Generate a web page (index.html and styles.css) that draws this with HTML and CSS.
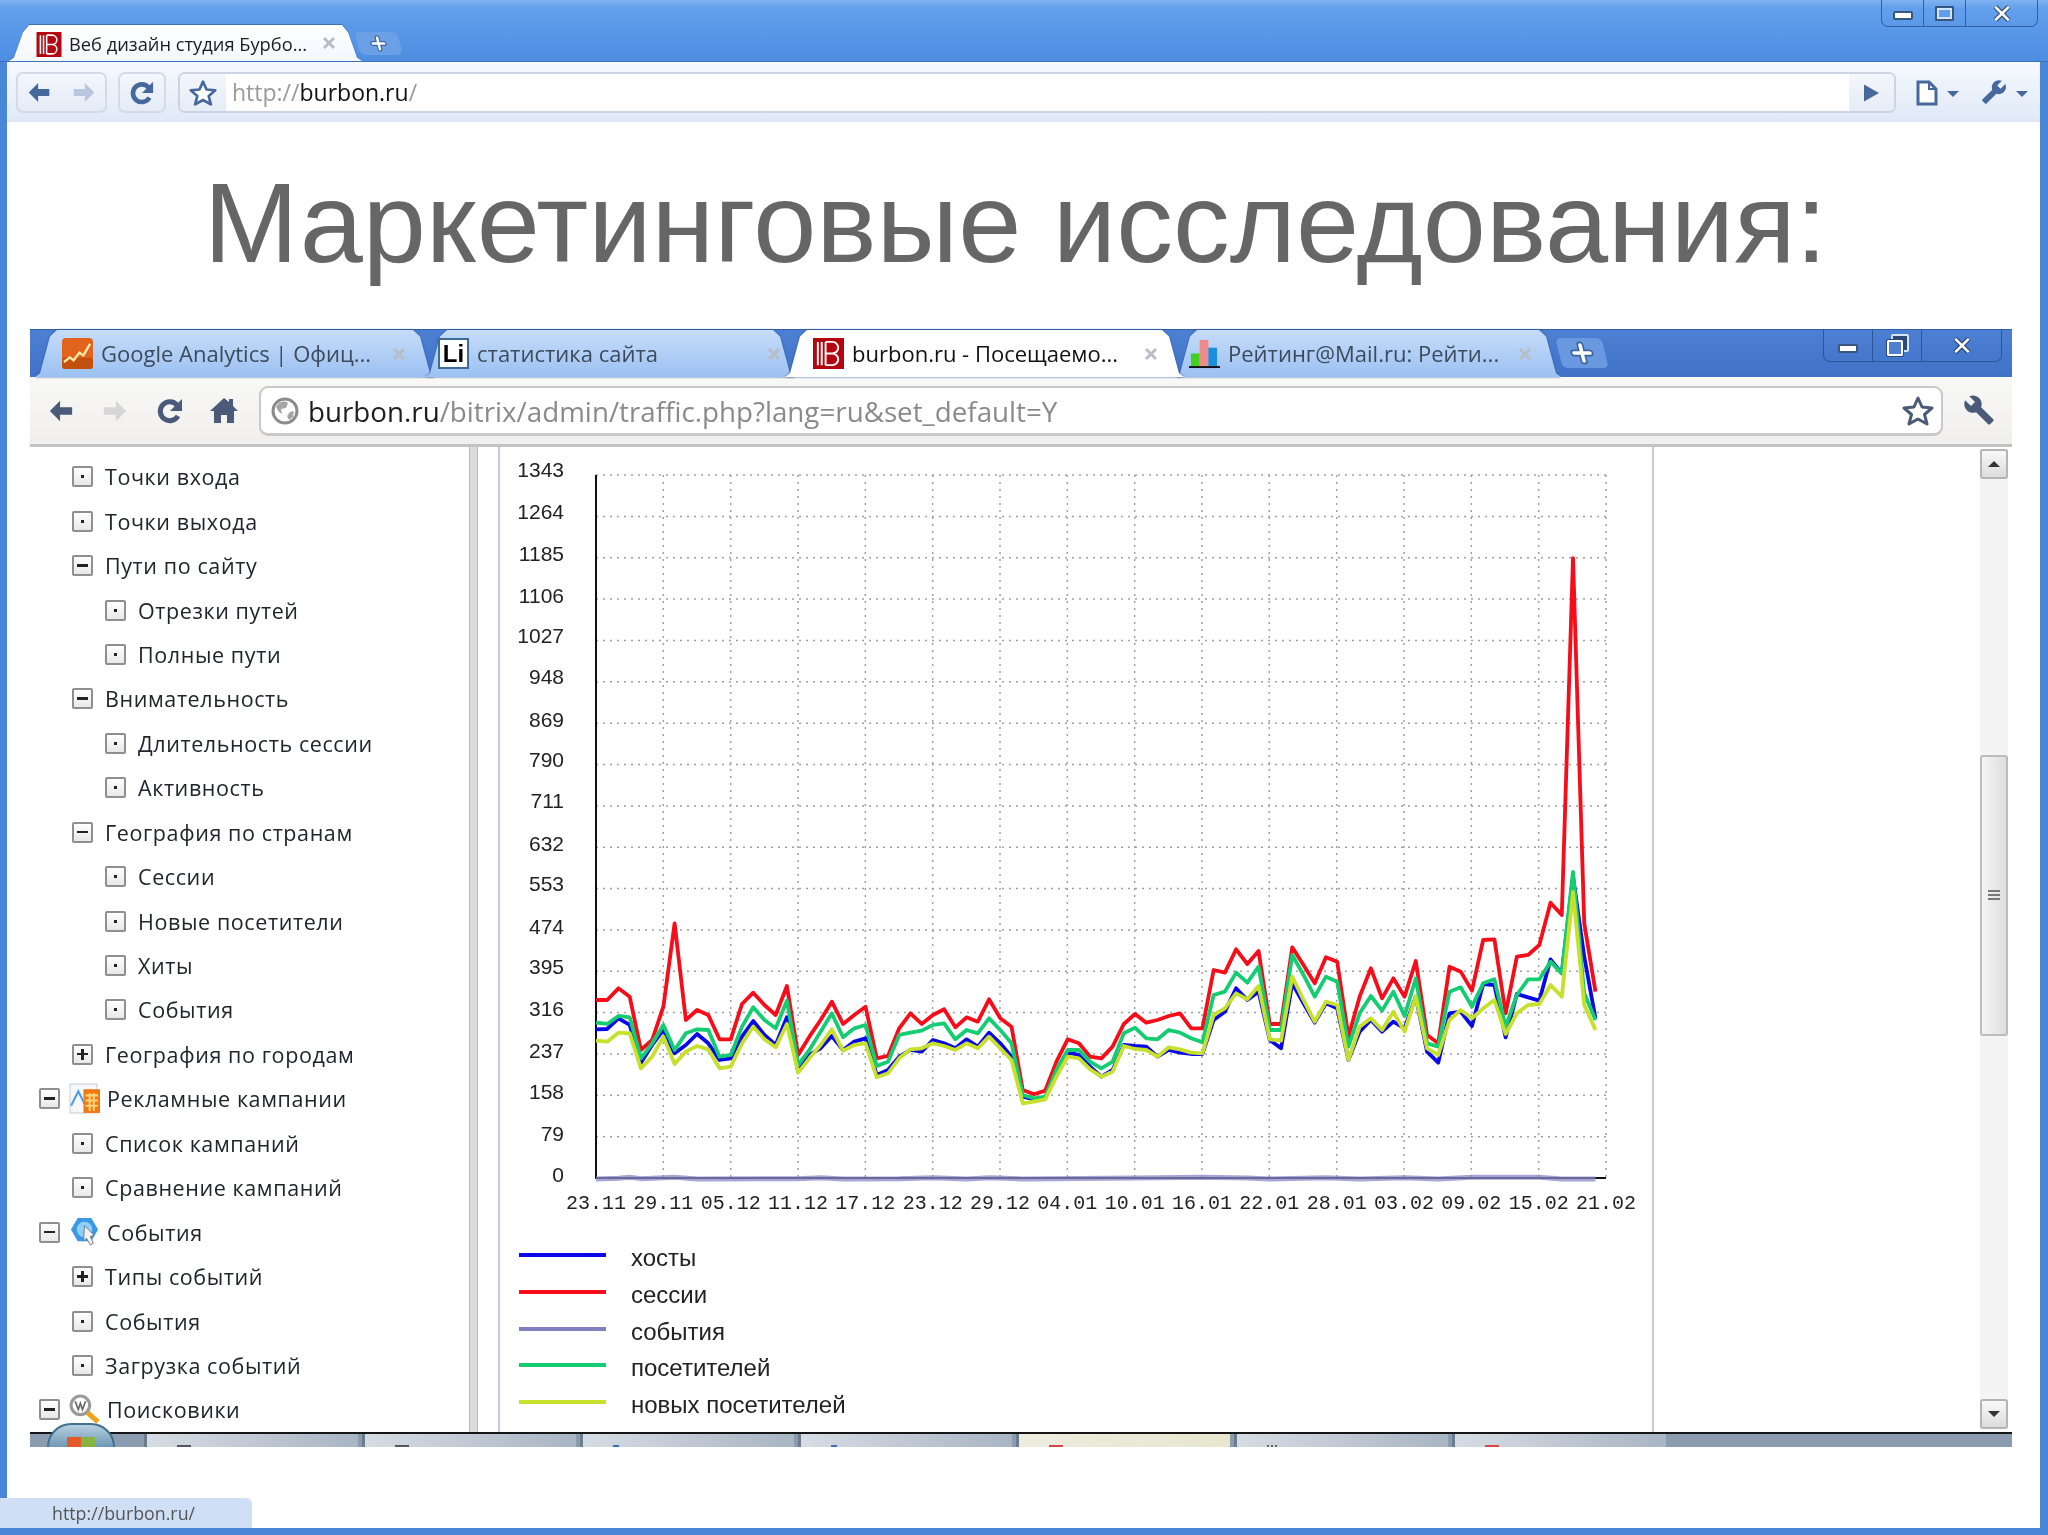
FILE: index.html
```html
<!DOCTYPE html>
<html lang="ru">
<head>
    <meta charset="utf-8">
    <title>Маркетинговые исследования</title>
    <link rel="stylesheet" href="styles.css">
</head>
<body>
    <svg class="defs" width="0" height="0">
        <symbol id="fav-b" viewBox="0 0 32 32">
            <rect width="32" height="32" fill="#b4060e"/>
            <path d="M5 4v24M9 4v24M13 4h7a6 6 0 0 1 0 12h-7M20 16a6 6 0 0 1 0 12h-7M13 4v24" fill="none" stroke="#fff" stroke-width="2"/>
        </symbol>
        <symbol id="fav-ga" viewBox="0 0 32 32">
            <rect width="32" height="32" rx="4" fill="#e2641c"/>
            <rect y="20" width="32" height="12" rx="3" fill="#c4500f"/>
            <path d="M2 25l6-5 4 3 6-8 4 3 7-12" fill="none" stroke="#ffe9a8" stroke-width="2.4"/>
        </symbol>
        <symbol id="fav-rating" viewBox="0 0 32 32">
            <rect x="2" y="16" width="9" height="13" fill="#3fd21a"/>
            <rect x="11" y="2" width="9" height="27" fill="#f08a8a"/>
            <rect x="20" y="10" width="9" height="19" fill="#1a90dc"/>
            <rect y="29" width="32" height="2" fill="#111"/>
        </symbol>
        <symbol id="ico-back" viewBox="0 0 28 24"><path d="M13 1 2 12l11 11v-7h13V8H13z"/></symbol>
        <symbol id="ico-reload" viewBox="0 0 28 28"><path d="M22 19a9.500 9.500 0 1 1-1-11" fill="none" stroke="currentColor" stroke-width="5"/><path d="M26 2v12H14z"/></symbol>
        <symbol id="ico-star" viewBox="0 0 32 32"><path d="M16 3l4 9 10 1-7.500 6.500L25 29l-9-5-9 5 2.500-9.500L2 13l10-1z" fill="#fff" stroke="currentColor" stroke-width="3" stroke-linejoin="round"/></symbol>
        <symbol id="ico-wrench" viewBox="0 0 24 24"><path d="M22.700 19l-9.100-9.100c.9-2.300.4-5-1.500-6.900-2-2-5-2.400-7.400-1.300L9 6 6 9 1.600 4.700C.4 7.100.9 10.100 2.900 12.100c1.900 1.900 4.600 2.400 6.900 1.500l9.100 9.100c.4.4 1 .4 1.400 0l2.300-2.300c.5-.4.5-1.100.1-1.400z"/></symbol>
        <symbol id="ico-close" viewBox="0 0 14 14"><path d="M2 2l10 10M12 2L2 12" fill="none" stroke="currentColor" stroke-width="3"/></symbol>
        <symbol id="ico-plus" viewBox="0 0 24 24"><path d="M12 4v16M4 12h16" stroke="#3d659f" stroke-width="7" stroke-linecap="round"/><path d="M12 4v16M4 12h16" stroke="#fff" stroke-width="3.600" stroke-linecap="round"/></symbol>
    </svg>

    <div class="window">
        <div class="strip">
            <div class="tab tab-outer">
                <svg class="fav-outer"><use href="#fav-b"/></svg>
                <span class="tab-title">Веб дизайн студия Бурбо...</span>
                <svg class="tab-close"><use href="#ico-close"/></svg>
            </div>
            <svg class="newtab newtab-outer" viewBox="0 0 24 24"><use href="#ico-plus"/></svg>
            <div class="controls controls-outer">
                <div class="ctl"><span class="ctl-min"></span></div>
                <div class="ctl"><span class="ctl-max"></span></div>
                <div class="ctl ctl-wide"><svg class="ctl-x" viewBox="0 0 24 20"><path d="M4 2l16 16M20 2L4 18" stroke="#39567f" stroke-width="6"/><path d="M4 2l16 16M20 2L4 18" stroke="#fff" stroke-width="3"/></svg></div>
            </div>
        </div>

        <div class="toolbar">
            <div class="navgroup">
                <svg class="arrow"><use href="#ico-back"/></svg>
                <svg class="arrow arrow-off flip"><use href="#ico-back"/></svg>
            </div>
            <div class="reload-btn"><svg class="reload"><use href="#ico-reload"/></svg></div>
            <div class="omni">
                <div class="omni-star"><svg class="star"><use href="#ico-star"/></svg></div>
                <div class="omni-url"><span class="url-dim">http://</span>burbon.ru<span class="url-dim">/</span></div>
                <div class="omni-go"><svg class="go" viewBox="0 0 16 18"><path d="M0 0l16 9-16 9z"/></svg></div>
            </div>
            <svg class="page-ico" viewBox="0 0 22 26"><path d="M2 2h11l7 7v15H2z" fill="#fff" stroke="currentColor" stroke-width="3"/><path d="M13 2v7h7" fill="none" stroke="currentColor" stroke-width="2"/></svg>
            <span class="caret"></span>
            <svg class="wrench-outer"><use href="#ico-wrench"/></svg>
            <span class="caret"></span>
        </div>

        <div class="page">
            <h1 class="headline">Маркетинговые исследования:</h1>

            <div class="shot">
                <div class="shot-tabs">
                    <div class="itab itab-ga">
                        <svg class="ifav"><use href="#fav-ga"/></svg>
                        <span class="itab-title">Google Analytics | Офиц...</span>
                        <svg class="tab-close"><use href="#ico-close"/></svg>
                    </div>
                    <div class="itab itab-li">
                        <span class="fav-li">Li</span>
                        <span class="itab-title">статистика сайта</span>
                        <svg class="tab-close"><use href="#ico-close"/></svg>
                    </div>
                    <div class="itab itab-active">
                        <svg class="ifav"><use href="#fav-b"/></svg>
                        <span class="itab-title">burbon.ru - Посещаемо...</span>
                        <svg class="tab-close"><use href="#ico-close"/></svg>
                    </div>
                    <div class="itab itab-mail">
                        <svg class="ifav"><use href="#fav-rating"/></svg>
                        <span class="itab-title">Рейтинг@Mail.ru: Рейти...</span>
                        <svg class="tab-close"><use href="#ico-close"/></svg>
                    </div>
                    <svg class="newtab newtab-inner" viewBox="0 0 24 24"><use href="#ico-plus"/></svg>
                    <div class="controls controls-inner">
                        <div class="ctl"><span class="ctl-min"></span></div>
                        <div class="ctl"><span class="ctl-restore"></span></div>
                        <div class="ctl ctl-wide"><svg class="ctl-x" viewBox="0 0 24 20"><path d="M4 2l16 16M20 2L4 18" stroke="#2c4a78" stroke-width="6"/><path d="M4 2l16 16M20 2L4 18" stroke="#fff" stroke-width="3"/></svg></div>
                    </div>
                </div>

                <div class="shot-toolbar">
                    <svg class="iarrow"><use href="#ico-back"/></svg>
                    <svg class="iarrow iarrow-off flip"><use href="#ico-back"/></svg>
                    <svg class="ireload"><use href="#ico-reload"/></svg>
                    <svg class="ihome" viewBox="0 0 28 28"><path d="M14 2L0 15h4v12h7v-8h6v8h7V15h4l-5-5V3h-4v3z"/></svg>
                    <div class="iomni">
                        <svg class="globe" viewBox="0 0 28 28"><circle cx="14" cy="14" r="12" fill="#fff" stroke="#8b8b8b" stroke-width="3"/><path d="M8 6c4-2 7-2 9 0l-2 5-5 1 1 5-3-2-3-5zM19 15l4-1-1 6-4 3-2-4z" fill="#a5a5a5"/></svg>
                        <div class="iurl">burbon.ru<span class="iurl-dim">/bitrix/admin/traffic.php?lang=ru&amp;set_default=Y</span></div>
                        <svg class="istar"><use href="#ico-star"/></svg>
                    </div>
                    <svg class="iwrench"><use href="#ico-wrench"/></svg>
                </div>

                <div class="shot-body">
                    <ul class="tree">
                        <li class="row lvl2"><span class="box box-dot"></span>Точки входа</li>
                        <li class="row lvl2"><span class="box box-dot"></span>Точки выхода</li>
                        <li class="row lvl2"><span class="box box-minus"></span>Пути по сайту</li>
                        <li class="row lvl3"><span class="box box-dot"></span>Отрезки путей</li>
                        <li class="row lvl3"><span class="box box-dot"></span>Полные пути</li>
                        <li class="row lvl2"><span class="box box-minus"></span>Внимательность</li>
                        <li class="row lvl3"><span class="box box-dot"></span>Длительность сессии</li>
                        <li class="row lvl3"><span class="box box-dot"></span>Активность</li>
                        <li class="row lvl2"><span class="box box-minus"></span>География по странам</li>
                        <li class="row lvl3"><span class="box box-dot"></span>Сессии</li>
                        <li class="row lvl3"><span class="box box-dot"></span>Новые посетители</li>
                        <li class="row lvl3"><span class="box box-dot"></span>Хиты</li>
                        <li class="row lvl3"><span class="box box-dot"></span>События</li>
                        <li class="row lvl2"><span class="box box-plus"></span>География по городам</li>
                        <li class="row lvl1"><span class="box box-minus"></span>
                            <svg class="tree-ico" viewBox="0 0 30 30"><rect x="1" y="1" width="26" height="28" fill="#f6f8fb" stroke="#c9cdd6"/><path d="M2 22l7-14 6 12" fill="none" stroke="#4aa0e8" stroke-width="2"/><rect x="14" y="6" width="16" height="23" fill="#f07a12"/><path d="M16 12h12M16 17h12M16 22h12M20 10v17M24 10v17" stroke="#ffd27a" stroke-width="2"/></svg>
                            Рекламные кампании</li>
                        <li class="row lvl2"><span class="box box-dot"></span>Список кампаний</li>
                        <li class="row lvl2"><span class="box box-dot"></span>Сравнение кампаний</li>
                        <li class="row lvl1"><span class="box box-minus"></span>
                            <svg class="tree-ico" viewBox="0 0 30 32"><path d="M8 1h14l7 12-7 12H8L1 13z" fill="#3b98e6"/><circle cx="15" cy="13" r="8" fill="#8fd0f8"/><path d="M15 9l10 10-4 1 3 7-3 2-4-7-3 3z" fill="#f3f3f3" stroke="#777"/></svg>
                            События</li>
                        <li class="row lvl2"><span class="box box-plus"></span>Типы событий</li>
                        <li class="row lvl2"><span class="box box-dot"></span>События</li>
                        <li class="row lvl2"><span class="box box-dot"></span>Загрузка событий</li>
                        <li class="row lvl1"><span class="box box-minus"></span>
                            <svg class="tree-ico" viewBox="0 0 30 30"><circle cx="11" cy="11" r="9" fill="#fff" stroke="#9a9a9a" stroke-width="3"/><path d="M6 7l3 8 2-6 2 6 3-8" fill="none" stroke="#666" stroke-width="1.600"/><path d="M18 18l10 9" stroke="#eda51f" stroke-width="5"/></svg>
                            Поисковики</li>
                    </ul>
                    <div class="splitter"></div>

                    <div class="report">
                        <svg class="chart" viewBox="500 447 1151 791" width="1151" height="791">
                            <path class="grid" d="M596 475H1606M596 516.400H1606M596 557.800H1606M596 599.100H1606M596 640.500H1606M596 681.800H1606M596 723.200H1606M596 764.500H1606M596 805.900H1606M596 847.200H1606M596 888.600H1606M596 929.900H1606M596 971.300H1606M596 1012.600H1606M596 1054H1606M596 1095.300H1606M596 1136.700H1606M663.300 475V1178M730.700 475V1178M798 475V1178M865.300 475V1178M932.700 475V1178M1000 475V1178M1067.300 475V1178M1134.700 475V1178M1202 475V1178M1269.300 475V1178M1336.700 475V1178M1404 475V1178M1471.300 475V1178M1538.700 475V1178M1606 475V1178"/>
                            <path class="axis" d="M596 475V1178H1606"/>
                            <g class="ylabels">
                                <text x="564" y="476.500">1343</text>
                                <text x="564" y="519">1264</text>
                                <text x="564" y="561">1185</text>
                                <text x="564" y="602.600">1106</text>
                                <text x="564" y="643">1027</text>
                                <text x="564" y="684.300">948</text>
                                <text x="564" y="726.700">869</text>
                                <text x="564" y="767">790</text>
                                <text x="564" y="808.400">711</text>
                                <text x="564" y="850.700">632</text>
                                <text x="564" y="891.100">553</text>
                                <text x="564" y="934">474</text>
                                <text x="564" y="974">395</text>
                                <text x="564" y="1015.500">316</text>
                                <text x="564" y="1057.500">237</text>
                                <text x="564" y="1098.800">158</text>
                                <text x="564" y="1140.700">79</text>
                                <text x="564" y="1181.500">0</text>
                            </g>
                            <g class="xlabels">
                                <text x="596" y="1209">23.11</text>
                                <text x="663.300" y="1209">29.11</text>
                                <text x="730.700" y="1209">05.12</text>
                                <text x="798" y="1209">11.12</text>
                                <text x="865.300" y="1209">17.12</text>
                                <text x="932.700" y="1209">23.12</text>
                                <text x="1000" y="1209">29.12</text>
                                <text x="1067.300" y="1209">04.01</text>
                                <text x="1134.700" y="1209">10.01</text>
                                <text x="1202" y="1209">16.01</text>
                                <text x="1269.300" y="1209">22.01</text>
                                <text x="1336.700" y="1209">28.01</text>
                                <text x="1404" y="1209">03.02</text>
                                <text x="1471.300" y="1209">09.02</text>
                                <text x="1538.700" y="1209">15.02</text>
                                <text x="1606" y="1209">21.02</text>
                            </g>
                            <!-- x = day number, y = px from 880 at 3x -->
                            <g transform="translate(596 880) scale(11.23 .3333)">
                                <polyline class="line line-hosts" points="0,448 1,447 2,415 3,435 4,548 5,495 6,450 7,520 8,495 9,462 10,490 11,540 12,535 13,470 14,423 15,465 16,495 17,412 18,575 19,525 20,505 21,468 22,510 23,485 24,475 25,585 26,570 27,530 28,510 29,515 30,480 31,490 32,505 33,478 34,500 35,458 36,490 37,530 38,650 39,658 40,655 41,580 42,518 43,525 44,560 45,590 46,570 47,495 48,498 49,500 50,530 51,510 52,518 53,522 54,522 55,420 56,395 57,325 58,360 59,335 60,480 61,505 62,310 63,370 64,428 65,370 66,385 67,540 68,455 69,420 70,455 71,425 72,445 73,350 74,515 75,548 76,400 77,395 78,438 79,312 80,315 81,472 82,342 83,352 84,362 85,238 86,280 87,-10 88,230 89,415"/>
                                <polyline class="line line-sessions" points="0,360 1,360 2,325 3,350 4,510 5,480 6,380 7,130 8,420 9,390 10,405 11,478 12,478 13,372 14,338 15,375 16,405 17,318 18,525 19,470 20,420 21,365 22,432 23,405 24,380 25,535 26,528 27,445 28,400 29,432 30,405 31,388 32,442 33,412 34,425 35,358 36,415 37,440 38,630 39,643 40,632 41,545 42,478 43,490 44,530 45,535 46,500 47,432 48,402 49,428 50,420 51,408 52,400 53,445 54,445 55,270 56,278 57,208 58,252 59,213 60,432 61,432 62,202 63,255 64,310 65,232 66,245 67,470 68,350 69,265 70,355 71,295 72,350 73,243 74,465 75,490 76,260 77,275 78,332 79,180 80,178 81,400 82,230 83,225 84,195 85,68 86,105 87,-966 88,130 89,335"/>
                                <polyline class="line line-events" points="0,897 2,895 3,892 4,896 7,892 9,897 18,896 20,893 22,897 27,896 30,893 33,897 35,893 38,897 48,894 50,893 54,892 58,894 60,897 65,893 68,897 72,893 75,897 78,892 84,892 86,897 89,897"/>
                                <polyline class="line line-visitors" points="0,428 1,432 2,408 3,412 4,535 5,490 6,435 7,510 8,460 9,448 10,450 11,530 12,525 13,440 14,382 15,420 16,445 17,362 18,555 19,510 20,455 21,400 22,472 23,445 24,435 25,558 26,545 27,465 28,458 29,452 30,435 31,430 32,478 33,450 34,460 35,415 36,450 37,490 38,645 39,655 40,650 41,570 42,510 43,510 44,545 45,565 46,545 47,460 48,443 49,475 50,478 51,450 52,458 53,475 54,487 55,345 56,335 57,278 58,308 59,260 60,450 61,450 62,225 63,285 64,350 65,290 66,305 67,500 68,400 69,348 70,392 71,335 72,408 73,295 74,490 75,500 76,335 77,322 78,380 79,310 80,298 81,440 82,345 83,298 84,298 85,245 86,280 87,-24 88,340 89,420"/>
                                <polyline class="line line-new" points="0,482 1,485 2,458 3,460 4,565 5,530 6,470 7,552 8,515 9,498 10,508 11,565 12,560 13,490 14,440 15,478 16,502 17,432 18,578 19,535 20,495 21,448 22,512 23,495 24,490 25,592 26,580 27,535 28,508 29,505 30,490 31,498 32,510 33,490 34,505 35,470 36,505 37,540 38,670 39,665 40,658 41,590 42,530 43,535 44,568 45,590 46,575 47,498 48,507 49,510 50,530 51,502 52,508 53,518 54,520 55,405 56,385 57,340 58,358 59,318 60,478 61,482 62,290 63,360 64,425 65,365 66,375 67,540 68,440 69,415 70,450 71,395 72,455 73,350 74,505 75,525 76,420 77,390 78,415 79,385 80,360 81,462 82,400 83,375 84,372 85,315 86,350 87,36 88,375 89,450"/>
                            </g>
                        </svg>
                        <ul class="legend">
                            <li class="legend-row"><span class="swatch swatch-hosts"></span>хосты</li>
                            <li class="legend-row"><span class="swatch swatch-sessions"></span>сессии</li>
                            <li class="legend-row"><span class="swatch swatch-events"></span>события</li>
                            <li class="legend-row"><span class="swatch swatch-visitors"></span>посетителей</li>
                            <li class="legend-row"><span class="swatch swatch-new"></span>новых посетителей</li>
                        </ul>
                    </div>

                    <div class="scrollbar">
                        <div class="sb-btn"><span class="sb-up"></span></div>
                        <div class="sb-track"><div class="sb-thumb"><span class="sb-grip"></span></div></div>
                        <div class="sb-btn"><span class="sb-down"></span></div>
                    </div>
                </div>

                <div class="taskbar">
                    <div class="orb"><span class="orb-flag"></span></div>
                    <div class="task"><span class="task-mark"></span></div>
                    <div class="task"><span class="task-mark"></span></div>
                    <div class="task"><span class="task-mark task-mark-blue"></span></div>
                    <div class="task"><span class="task-mark task-mark-blue"></span></div>
                    <div class="task task-active"><span class="task-mark task-mark-red"></span></div>
                    <div class="task"><span class="task-mark task-mark-dots"></span></div>
                    <div class="task"><span class="task-mark task-mark-red"></span></div>
                </div>
            </div>
        </div>

        <div class="status">http://burbon.ru/</div>
    </div>
</body>
</html>
```

FILE: styles.css
```css
* {
    box-sizing: border-box;
}
body {
    margin: 0;
    width: 2048px;
    height: 1535px;
    overflow: hidden;
    background: #fff;
    font-family: 'Open Sans', sans-serif;
    color: #222;
}
ul {
    list-style: none;
    margin: 0;
    padding: 0;
}
svg {
    display: block;
    flex: none;
    fill: currentColor;
}
.defs {
    position: absolute;
}
.flip {
    transform: scaleX(-1);
}

/* outer browser */
.window {
    position: relative;
    height: 1535px;
    padding: 0 7px 7px;
    background: #4a86d8;
    display: flex;
    flex-direction: column;
    filter: blur(.5px);
}
.strip {
    height: 62px;
    margin: 0 -7px;
    padding-left: 9px;
    display: flex;
    background: linear-gradient(#7fb3f0, #629fec 14%, #4d8ee2);
    border-bottom: 1px solid #3c72bd;
}
.tab {
    position: relative;
    width: 353px;
    margin-top: 25px;
    padding: 0 26px 0 27px;
    display: flex;
    align-items: center;
    gap: 7px;
    filter: drop-shadow(0 -1px 0 #3f70b5);
}
.tab::before {
    content: "";
    position: absolute;
    inset: 0;
    z-index: -1;
    background: linear-gradient(#fff, #f2f7fe);
    clip-path: polygon(0 100%, 5px 90%, 14px 20%, 20px 0, calc(100% - 20px) 0, calc(100% - 14px) 20%, calc(100% - 5px) 90%, 100% 100%);
}
.fav-outer {
    width: 26px;
    height: 25px;
    margin-top: 3px;
}
.tab-title {
    flex: 1;
    font-size: 18.300px;
    white-space: nowrap;
    color: #1c1c1c;
}
.tab-close {
    width: 14px;
    height: 14px;
    color: #b9bdc6;
}
.newtab-outer {
    width: 43px;
    height: 23px;
    margin: 32px 0 0 -5px;
    padding: 3px 10px;
    background: #6b9fe6;
    border-radius: 5px 5px 6px 6px;
    transform: skewX(14deg);
}
.controls {
    margin-left: auto;
    display: flex;
    border: 1px solid #3560a0;
    border-top: 0;
    border-radius: 0 0 7px 7px;
}
.controls-outer {
    height: 27px;
    margin-right: 10px;
}
.ctl {
    width: 42px;
    display: flex;
    align-items: center;
    justify-content: center;
    border-right: 1px solid #3560a0;
}
.ctl:last-child {
    border-right: 0;
}
.ctl-wide {
    width: 71px;
}
.ctl-min {
    width: 20px;
    height: 9px;
    background: #fff;
    border: 2px solid #39567f;
    border-radius: 2px;
    margin-top: 5px;
}
.ctl-max {
    width: 19px;
    height: 15px;
    border: 2px solid #39567f;
    outline: 2px solid #d5e4f8;
    outline-offset: -4px;
    border-radius: 1px;
}
.ctl-x {
    width: 20px;
    height: 17px;
    fill: none;
}

.toolbar {
    height: 60px;
    margin: 0 1px 0 0;
    padding: 10px 0 0 9px;
    display: flex;
    align-items: flex-start;
    background: linear-gradient(#f6f9fe, #dfe9f7);
    color: #47689c;
}
.navgroup, .reload-btn {
    height: 41px;
    display: flex;
    align-items: center;
    border: 2px solid #d3dbe9;
    border-radius: 7px;
    background: linear-gradient(#f4f7fc, #e4ebf6);
}
.navgroup {
    width: 91px;
    padding-left: 9px;
    gap: 21px;
}
.arrow {
    width: 24px;
    height: 21px;
}
.arrow-off {
    color: #b8c6de;
}
.reload-btn {
    width: 48px;
    margin-left: 11px;
    justify-content: center;
}
.reload {
    width: 26px;
    height: 26px;
}
.omni {
    width: 1718px;
    height: 41px;
    margin-left: 12px;
    display: flex;
    background: #fff;
    border: 2px solid #ccd3e2;
    border-radius: 7px;
    overflow: hidden;
}
.omni-star, .omni-go {
    display: flex;
    align-items: center;
    justify-content: center;
    background: linear-gradient(#f4f7fc, #e5ecf6);
}
.omni-star {
    width: 46px;
}
.star {
    width: 28px;
    height: 28px;
}
.omni-url {
    flex: 1;
    padding-left: 6px;
    font-size: 23px;
    line-height: 36px;
    color: #111;
}
.url-dim {
    color: #9a9a9a;
}
.omni-go {
    width: 45px;
}
.go {
    width: 15px;
    height: 18px;
}
.page-ico {
    width: 22px;
    height: 26px;
    margin: 8px 0 0 20px;
}
.caret {
    width: 0;
    height: 0;
    margin: 19px 0 0 9px;
    border: 6px solid transparent;
    border-top: 6px solid currentColor;
}
.wrench-outer {
    width: 26px;
    height: 26px;
    margin: 7px 0 0 22px;
    transform: scaleX(-1);
}

.page {
    flex: 1;
    margin-right: 1px;
    background: #fff;
    display: flex;
    flex-direction: column;
}
.headline {
    height: 207px;
    margin: 0;
    padding: 18px 16px 0 0;
    font-family: 'Liberation Sans', sans-serif;
    font-weight: 400;
    font-size: 113.500px;
    line-height: 166px;
    text-align: center;
    color: #666;
    white-space: nowrap;
}

/* screenshot inside the slide */
.shot {
    width: 1982px;
    margin-left: 23px;
    height: 1118px;
    display: flex;
    flex-direction: column;
    position: relative;
}
.shot-tabs {
    height: 48px;
    display: flex;
    padding-left: 5px;
    background: linear-gradient(#4d7fd2, #3f72c8);
    border-top: 1px solid #2f5ea8;
}
.itab {
    position: relative;
    height: 47px;
    display: flex;
    align-items: center;
    gap: 8px;
    filter: drop-shadow(0 0 1px #2f5a9c);
}
.itab::before {
    content: "";
    position: absolute;
    inset: 0;
    z-index: -1;
    background: linear-gradient(#c6dcf9, #9cc1f2);
    clip-path: polygon(0 100%, 5px 92%, 15px 14%, 22px 0, calc(100% - 22px) 0, calc(100% - 15px) 14%, calc(100% - 5px) 92%, 100% 100%);
}
.itab-ga {
    width: 400px;
    padding: 0 29px 0 27px;
}
.itab-li {
    width: 370px;
    margin-left: -10px;
    padding: 0 14px 0 13px;
}
.itab-active {
    width: 399px;
    margin-left: -10px;
    padding: 0 26px 0 28px;
    z-index: 1;
}
.itab-active::before {
    background: #fff;
}
.itab-mail {
    width: 386px;
    margin-left: -9px;
    padding: 0 29px 0 14px;
}
.ifav {
    width: 31px;
    height: 31px;
}
.fav-li {
    width: 31px;
    height: 31px;
    flex: none;
    background: #fff;
    border: 2px solid #3d6c96;
    font-family: 'Liberation Sans', sans-serif;
    font-weight: 700;
    font-size: 24px;
    line-height: 28px;
    text-align: center;
    color: #000;
}
.itab-title {
    flex: 1;
    margin-top: -2px;
    font-size: 22px;
    white-space: nowrap;
    color: #3d4a5c;
}
.itab-active .itab-title {
    color: #111;
}
.newtab-inner {
    width: 46px;
    height: 30px;
    margin: 8px 0 0 -2px;
    padding: 3px 11px;
    background: #6a98e0;
    border-radius: 5px;
    transform: skewX(14deg);
}
.controls-inner {
    height: 32px;
    margin-right: 10px;
    border-color: #2c5596;
}
.controls-inner .ctl {
    width: 49px;
    border-color: #2c5596;
}
.controls-inner .ctl-wide {
    width: 79px;
}
.ctl-restore {
    position: relative;
    width: 16px;
    height: 16px;
    margin: 5px 5px 0 0;
    background: #4f7fd0;
    border: 2px solid #fff;
    outline: 1px solid #2c4a78;
    box-shadow: 5px -5px 0 -1px #2c4a78, 5px -5px 0 1px #d5e4f8;
    border-radius: 1px;
}

.shot-toolbar {
    height: 70px;
    padding: 9px 17px 0 18px;
    display: flex;
    align-items: flex-start;
    background: linear-gradient(#f8f8f6, #f0efed);
    border-bottom: 3px solid #c3c3c3;
    color: #4b5a78;
}
.iarrow {
    width: 26px;
    height: 24px;
    margin: 13px 28px 0 0;
}
.iarrow-off {
    color: #d6d6d6;
}
.ireload {
    width: 28px;
    height: 28px;
    margin: 11px 26px 0 0;
}
.ihome {
    width: 28px;
    height: 28px;
    margin: 10px 21px 0 0;
}
.iomni {
    width: 1684px;
    height: 50px;
    display: flex;
    align-items: center;
    padding: 0 7px 0 10px;
    background: #fff;
    border: 2px solid #c9c9c9;
    border-bottom-width: 3px;
    border-radius: 9px;
}
.globe {
    width: 28px;
    height: 28px;
}
.iurl {
    flex: 1;
    padding-left: 9px;
    font-size: 27.750px;
    white-space: nowrap;
    color: #1d1d1d;
}
.iurl-dim {
    color: #8a8a8a;
}
.istar {
    width: 32px;
    height: 32px;
}
.iwrench {
    width: 32px;
    height: 32px;
    margin: 8px 0 0 20px;
}

.shot-body {
    flex: 1;
    min-height: 0;
    display: flex;
    overflow: hidden;
    background: #fff;
}
.tree {
    width: 439px;
    padding-top: 7.500px;
    overflow: hidden;
}
.row {
    height: 44.450px;
    display: flex;
    align-items: center;
    font-size: 21.500px;
    letter-spacing: .6px;
    white-space: nowrap;
    color: #20242c;
}
.lvl1 {
    padding-left: 9px;
}
.lvl2 {
    padding-left: 42px;
}
.lvl3 {
    padding-left: 75px;
}
.box {
    position: relative;
    width: 21px;
    height: 21px;
    flex: none;
    margin-right: 12px;
    border: 2px solid #8f8f8f;
    border-radius: 2px;
    background: linear-gradient(#fff, #e8e8e8);
}
.lvl1 .box {
    margin-right: 9px;
}
.box::before, .box::after {
    content: "";
    position: absolute;
    background: #222;
}
.box-dot::before {
    left: 7px;
    top: 7px;
    width: 3px;
    height: 3px;
}
.box-dot::after {
    display: none;
}
.box-minus::before, .box-plus::before {
    left: 3px;
    top: 7px;
    width: 11px;
    height: 2.500px;
}
.box-minus::after {
    display: none;
}
.box-plus::after {
    left: 7px;
    top: 3px;
    width: 2.500px;
    height: 11px;
}
.tree-ico {
    width: 31px;
    height: 31px;
    margin-right: 7px;
}
.splitter {
    width: 9px;
    background: #dcdcdc;
    border: solid #b9b9c2;
    border-width: 0 1px;
}

.report {
    width: 1156px;
    margin-left: 20px;
    border: solid #c6c6de;
    border-width: 0 2px;
}
.grid {
    fill: none;
    stroke: #a0a0a0;
    stroke-width: 1.500;
    stroke-dasharray: 2 5;
}
.axis {
    fill: none;
    stroke: #111;
    stroke-width: 2;
}
.ylabels text {
    font-family: 'Liberation Sans', sans-serif;
    font-size: 21px;
    text-anchor: end;
    fill: #222;
}
.xlabels text {
    font-family: 'Liberation Mono', monospace;
    font-size: 20px;
    text-anchor: middle;
    fill: #222;
}
.line {
    fill: none;
    stroke-width: 3.800;
    stroke-linejoin: round;
    vector-effect: non-scaling-stroke;
}
.line-hosts { stroke: #0808e8; }
.line-sessions { stroke: #f70d1a; }
.line-events { stroke: #8a86c8; stroke-width: 5; stroke-opacity: .75; }
.line-visitors { stroke: #14cc72; }
.line-new { stroke: #c6e02c; }

.legend {
    padding: 2px 0 0 19px;
}
.legend-row {
    height: 36.700px;
    display: flex;
    align-items: center;
    font-family: 'Liberation Sans', sans-serif;
    font-size: 24px;
    color: #222;
}
.swatch {
    width: 87px;
    height: 4px;
    margin: 0 25px 6px 0;
}
.swatch-hosts { background: #0808e8; }
.swatch-sessions { background: #f70d1a; }
.swatch-events { background: #8080c0; }
.swatch-visitors { background: #14cc72; }
.swatch-new { background: #c6e02c; }

.scrollbar {
    width: 28px;
    margin: 2px 4px 3px auto;
    display: flex;
    flex-direction: column;
    background: #f4f4f4;
}
.sb-btn {
    height: 30px;
    display: flex;
    align-items: center;
    justify-content: center;
    background: linear-gradient(#f9f9f9, #dcdcdc);
    border: 2px solid #b5b5b5;
    border-radius: 3px;
}
.sb-up, .sb-down {
    width: 0;
    height: 0;
    border: 6px solid transparent;
}
.sb-up {
    border-bottom: 6px solid #333;
    border-top: 0;
}
.sb-down {
    border-top: 6px solid #333;
    border-bottom: 0;
}
.sb-track {
    flex: 1;
    padding-top: 276px;
}
.sb-thumb {
    height: 281px;
    display: flex;
    align-items: center;
    justify-content: center;
    background: linear-gradient(90deg, #f4f4f4, #dedede);
    border: 2px solid #bcbcbc;
    border-radius: 3px;
}
.sb-grip {
    width: 12px;
    height: 11px;
    background: repeating-linear-gradient(#777 0 2px, transparent 2px 4px);
}

.taskbar {
    position: relative;
    height: 15px;
    padding-left: 114px;
    display: flex;
    gap: 2px;
    background: #8b9bb0;
    border-top: 2px solid #151515;
}
.orb {
    position: absolute;
    left: 17px;
    top: -11px;
    width: 68px;
    height: 24px;
    overflow: hidden;
    border: 2px solid #41708e;
    border-bottom: 0;
    border-radius: 34px 34px 0 0;
    background: linear-gradient(#b7d0e0, #6f97b4);
}
.orb-flag {
    display: block;
    width: 28px;
    height: 12px;
    margin: 12px auto 0;
    background: linear-gradient(90deg, #e2592b 50%, #86b341 50%);
}
.task {
    width: 214px;
    padding: 11px 0 0 30px;
    margin-right: 2px;
    background: linear-gradient(90deg, #d6dce3, #a9b5c3);
    border-left: 3px solid #6c7c8f;
}
.task-active {
    background: linear-gradient(90deg, #ededdf, #e8e6cf);
}
.task-mark {
    display: block;
    width: 14px;
    height: 2px;
    background: #556;
}
.task-mark-blue {
    width: 6px;
    background: #3c6fb0;
}
.task-mark-red {
    background: #d8484a;
}
.task-mark-dots {
    width: 12px;
    background: repeating-linear-gradient(90deg, #666 0 2px, transparent 2px 4px);
}

.status {
    position: absolute;
    left: 0;
    bottom: 7px;
    width: 252px;
    height: 30px;
    padding-left: 52px;
    font-size: 17.800px;
    line-height: 30px;
    color: #555;
    background: #cfe0f6;
    border-radius: 0 6px 0 0;
}
```
